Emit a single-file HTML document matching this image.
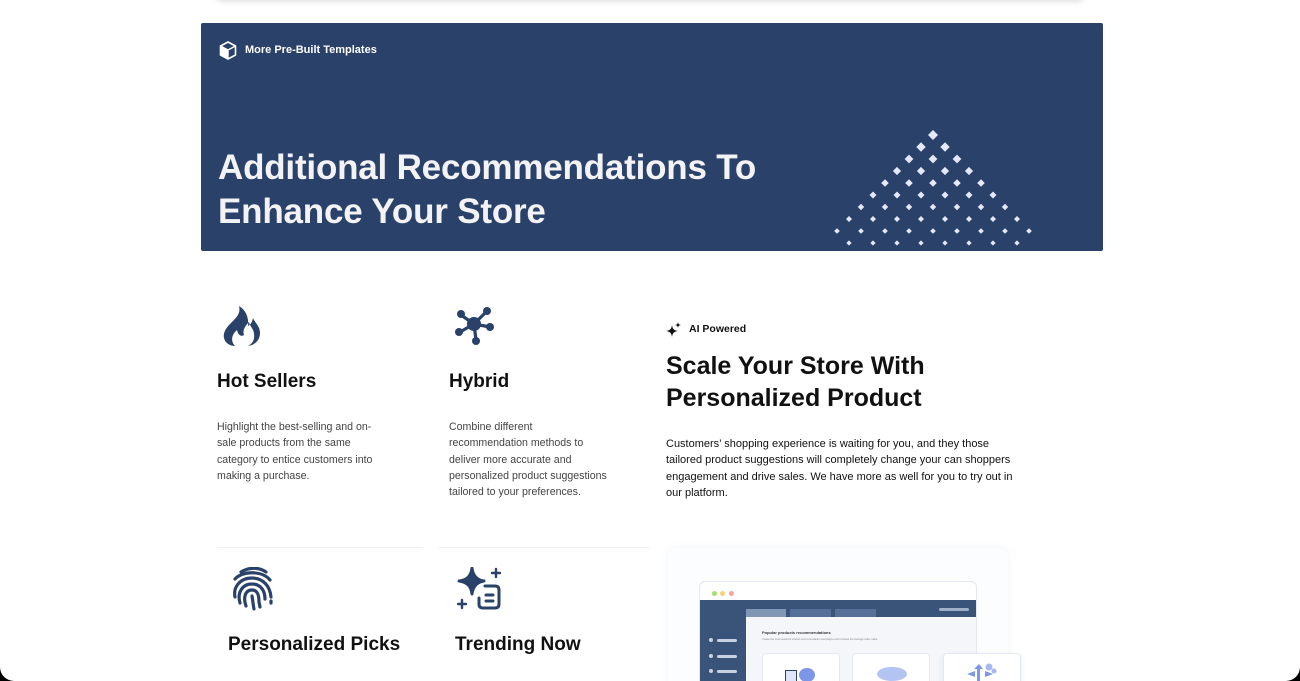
<!DOCTYPE html>
<html><head><meta charset="utf-8"><style>
*{margin:0;padding:0;box-sizing:border-box}
html,body{width:1300px;height:681px;overflow:hidden;background:#000}
.page{position:absolute;left:0;top:0;width:1300px;height:681px;background:#fff;border-radius:0 0 14px 14px;overflow:hidden;font-family:"Liberation Sans",sans-serif}
.abs{position:absolute}
.topcard{left:215px;top:-40px;width:870px;height:40px;background:#fff;box-shadow:0 2px 6px rgba(0,0,0,.12);border-radius:0 0 8px 8px}
.banner{left:201px;top:23px;width:902px;height:228px;background:#2a416a;border-radius:2px}
.tag{left:245px;top:44px;color:#fff;font-size:11px;font-weight:bold}
.h1{left:218px;top:146px;color:#f3f3f5;font-size:35px;font-weight:bold;line-height:44px;letter-spacing:-0.2px}
.ft{font-size:19px;font-weight:bold;color:#111}
.fd{font-size:10.6px;line-height:16.3px;color:#444;white-space:nowrap}
.line{height:1px;background:#efefef}
.rh{left:666px;top:350px;font-size:25px;font-weight:bold;line-height:32px;color:#111}
.rp{left:666px;top:436px;font-size:11px;line-height:16.3px;color:#111;white-space:nowrap}
</style></head><body><div class="page">
<div class="abs topcard"></div>
<div class="abs banner"></div>
<svg class="abs" style="left:219px;top:41px" width="18" height="19" viewBox="0 0 18 19"><path d="M9 1 L16.5 5 L16.5 14 L9 18 L1.5 14 L1.5 5 Z" fill="none" stroke="#fff" stroke-width="1.6" stroke-linejoin="round"/><path d="M1.5 5 L9 9 L16.5 5 M9 9 L9 18" fill="none" stroke="#fff" stroke-width="1.4"/><path d="M1.5 5 L9 9 L9 18 L1.5 14Z" fill="#fff"/></svg>
<div class="abs tag">More Pre-Built Templates</div>
<div class="abs h1">Additional Recommendations To<br>Enhance Your Store</div>
<svg class="abs" style="left:820px;top:120px" width="230" height="130" fill="#e4e8fb">
<path d="M113 10l5 5-5 5-5-5z"/>
<path d="M101 22.3l4.7 4.7-4.7 4.7-4.7-4.7zM125 22.3l4.7 4.7-4.7 4.7-4.7-4.7z"/>
<path d="M89 34.6l4.4 4.4-4.4 4.4-4.4-4.4zM113 34.6l4.4 4.4-4.4 4.4-4.4-4.4zM137 34.6l4.4 4.4-4.4 4.4-4.4-4.4z"/>
<path d="M77 46.9l4.1 4.1-4.1 4.1-4.1-4.1zM101 46.9l4.1 4.1-4.1 4.1-4.1-4.1zM125 46.9l4.1 4.1-4.1 4.1-4.1-4.1zM149 46.9l4.1 4.1-4.1 4.1-4.1-4.1z"/>
<path d="M65 59.2l3.8 3.8-3.8 3.8-3.8-3.8zM89 59.2l3.8 3.8-3.8 3.8-3.8-3.8zM113 59.2l3.8 3.8-3.8 3.8-3.8-3.8zM137 59.2l3.8 3.8-3.8 3.8-3.8-3.8zM161 59.2l3.8 3.8-3.8 3.8-3.8-3.8z"/>
<path d="M53 71.5l3.5 3.5-3.5 3.5-3.5-3.5zM77 71.5l3.5 3.5-3.5 3.5-3.5-3.5zM101 71.5l3.5 3.5-3.5 3.5-3.5-3.5zM125 71.5l3.5 3.5-3.5 3.5-3.5-3.5zM149 71.5l3.5 3.5-3.5 3.5-3.5-3.5zM173 71.5l3.5 3.5-3.5 3.5-3.5-3.5z"/>
<path d="M41 83.8l3.2 3.2-3.2 3.2-3.2-3.2zM65 83.8l3.2 3.2-3.2 3.2-3.2-3.2zM89 83.8l3.2 3.2-3.2 3.2-3.2-3.2zM113 83.8l3.2 3.2-3.2 3.2-3.2-3.2zM137 83.8l3.2 3.2-3.2 3.2-3.2-3.2zM161 83.8l3.2 3.2-3.2 3.2-3.2-3.2zM185 83.8l3.2 3.2-3.2 3.2-3.2-3.2z"/>
<path d="M29 96l3 3-3 3-3-3zM53 96l3 3-3 3-3-3zM77 96l3 3-3 3-3-3zM101 96l3 3-3 3-3-3zM125 96l3 3-3 3-3-3zM149 96l3 3-3 3-3-3zM173 96l3 3-3 3-3-3zM197 96l3 3-3 3-3-3z"/>
<path d="M17 108.2l2.8 2.8-2.8 2.8-2.8-2.8zM41 108.2l2.8 2.8-2.8 2.8-2.8-2.8zM65 108.2l2.8 2.8-2.8 2.8-2.8-2.8zM89 108.2l2.8 2.8-2.8 2.8-2.8-2.8zM113 108.2l2.8 2.8-2.8 2.8-2.8-2.8zM137 108.2l2.8 2.8-2.8 2.8-2.8-2.8zM161 108.2l2.8 2.8-2.8 2.8-2.8-2.8zM185 108.2l2.8 2.8-2.8 2.8-2.8-2.8zM209 108.2l2.8 2.8-2.8 2.8-2.8-2.8z"/>
<path d="M29 120.4l2.6 2.6-2.6 2.6-2.6-2.6zM53 120.4l2.6 2.6-2.6 2.6-2.6-2.6zM77 120.4l2.6 2.6-2.6 2.6-2.6-2.6zM101 120.4l2.6 2.6-2.6 2.6-2.6-2.6zM125 120.4l2.6 2.6-2.6 2.6-2.6-2.6zM149 120.4l2.6 2.6-2.6 2.6-2.6-2.6zM173 120.4l2.6 2.6-2.6 2.6-2.6-2.6zM197 120.4l2.6 2.6-2.6 2.6-2.6-2.6z"/>
</svg>

<svg class="abs" style="left:222px;top:305px" width="40" height="42" viewBox="0 0 40 42"><path d="M17 1C19 9 14 13 8 19C3 24 1 29 2 33C3 38 8 41 13 41C8 36 10 29 15 25C16 30 19 32 22 30C20 25 24 20 27 17C28 22 32 24 32 29C33 35 30 39 26 41C33 40 38 35 38 28C38 21 33 18 31 13C30 18 28 20 26 21C27 13 24 5 17 1Z" fill="#2a416a"/></svg>
<div class="abs ft" style="left:217px;top:371px">Hot Sellers</div>
<div class="abs fd" style="left:217px;top:419px">Highlight the best-selling and on-<br>sale products from the same<br>category to entice customers into<br>making a purchase.</div>
<svg class="abs" style="left:454px;top:306px" width="40" height="40" viewBox="0 0 40 40" fill="#2a416a" stroke="#2a416a" stroke-width="3.2"><line x1="20" y1="18" x2="7" y2="9"/><line x1="20" y1="18" x2="33" y2="5"/><line x1="20" y1="18" x2="36" y2="21"/><line x1="20" y1="18" x2="6" y2="26"/><line x1="20" y1="18" x2="22" y2="34"/><circle cx="20" cy="18" r="7" stroke="none"/><circle cx="7" cy="8" r="4" stroke="none"/><circle cx="33" cy="5" r="4" stroke="none"/><circle cx="36" cy="21" r="4" stroke="none"/><circle cx="5" cy="26" r="4" stroke="none"/><circle cx="22" cy="35" r="4" stroke="none"/></svg>
<div class="abs ft" style="left:449px;top:371px">Hybrid</div>
<div class="abs fd" style="left:449px;top:419px">Combine different<br>recommendation methods to<br>deliver more accurate and<br>personalized product suggestions<br>tailored to your preferences.</div>

<div class="abs line" style="left:217px;top:547px;width:205px"></div>
<div class="abs line" style="left:439px;top:547px;width:210px"></div>

<svg class="abs" style="left:232px;top:567px" width="43" height="44" viewBox="0 0 43 44" fill="none" stroke="#2a416a" stroke-width="3.2" stroke-linecap="round"><path d="M9 5C17 0 27 0 34 5"/><path d="M3 12C10 4 30 3 38 13"/><path d="M3 30C1 20 8 11 20 11C31 11 38 19 39 30"/><path d="M8 36C5 26 10 17 20 17C29 17 33 24 33 32"/><path d="M14 39C11 31 13 23 20 23C26 23 27 29 27 35L28 40"/><path d="M20 29C21 34 21 38 22 42"/><path d="M39 36L39 34"/></svg>
<div class="abs ft" style="left:228px;top:634px">Personalized Picks</div>
<svg class="abs" style="left:457px;top:567px" width="46" height="44" viewBox="0 0 46 44"><path d="M15 1C16 9 20 13 27 14C20 15 16 19 15 27C14 19 10 15 2 14C10 13 14 9 15 1Z" fill="#2a416a" stroke="#2a416a" stroke-width="3" stroke-linejoin="round"/><path d="M28 19H38Q42 19 42 23V37Q42 41 38 41H26Q22 41 22 37V31" fill="none" stroke="#2a416a" stroke-width="3" stroke-linecap="round"/><path d="M29 28H36M29 34H36" stroke="#2a416a" stroke-width="3" stroke-linecap="round"/><path d="M39 2V10M35 6H43M5 33V41M1 37H9" stroke="#2a416a" stroke-width="2.4" stroke-linecap="round"/></svg>
<div class="abs ft" style="left:455px;top:634px">Trending Now</div>

<svg class="abs" style="left:666px;top:322px" width="16" height="16" viewBox="0 0 16 16" fill="#111"><path d="M6 3C6.5 7 8 8.5 12 9C8 9.5 6.5 11 6 15C5.5 11 4 9.5 0 9C4 8.5 5.5 7 6 3Z"/><path d="M12 0C12.3 2 13 2.7 15 3C13 3.3 12.3 4 12 6C11.7 4 11 3.3 9 3C11 2.7 11.7 2 12 0Z"/></svg>
<div class="abs" style="left:689px;top:323px;font-size:10.5px;font-weight:bold;color:#111">AI Powered</div>
<div class="abs rh">Scale Your Store With<br>Personalized Product</div>
<div class="abs rp">Customers’ shopping experience is waiting for you, and they those<br>tailored product suggestions will completely change your can shoppers<br>engagement and drive sales. We have more as well for you to try out in<br>our platform.</div>

<div class="abs" style="left:668px;top:548px;width:340px;height:140px;background:#fcfdff;border-radius:10px;box-shadow:0 0 8px rgba(200,210,230,.25)"></div>
<div class="abs" style="left:699px;top:581px;width:278px;height:110px;background:#fff;border:1px solid #e3e8f4;border-radius:6px;overflow:hidden">
 <div class="abs" style="left:12px;top:9px;width:5px;height:5px;border-radius:50%;background:#a8e06c"></div>
 <div class="abs" style="left:20px;top:9px;width:5px;height:5px;border-radius:50%;background:#f5d27a"></div>
 <div class="abs" style="left:29px;top:9px;width:5px;height:5px;border-radius:50%;background:#f4a59a"></div>
 <div class="abs" style="left:0;top:18px;width:278px;height:100px;background:#3a5479"></div>
 <div class="abs" style="left:46px;top:27px;width:40px;height:9px;background:#8297b5"></div>
 <div class="abs" style="left:90px;top:27px;width:41px;height:9px;background:#56709a"></div>
 <div class="abs" style="left:135px;top:27px;width:41px;height:9px;background:#56709a"></div>
 <div class="abs" style="left:239px;top:26px;width:30px;height:3px;border-radius:2px;background:#9fb0c9"></div>
 <div class="abs" style="left:46px;top:35px;width:232px;height:80px;background:#f4f6fa"></div>
 <div class="abs" style="left:62px;top:48px;font-size:4px;font-weight:bold;color:#333">Popular products recommendations</div>
 <div class="abs" style="left:62px;top:56px;font-size:2.6px;color:#888">Create the most powerful product recommendation campaigns and increase the average order value.</div>
 <div class="abs" style="left:9px;top:56px;width:4px;height:4px;border-radius:50%;background:#c8d2e2"></div><div class="abs" style="left:17px;top:57px;width:20px;height:3px;border-radius:2px;background:#c8d2e2"></div>
 <div class="abs" style="left:9px;top:72px;width:4px;height:4px;border-radius:50%;background:#c8d2e2"></div><div class="abs" style="left:17px;top:73px;width:20px;height:3px;border-radius:2px;background:#c8d2e2"></div>
 <div class="abs" style="left:9px;top:87px;width:4px;height:4px;border-radius:50%;background:#c8d2e2"></div><div class="abs" style="left:17px;top:88px;width:20px;height:3px;border-radius:2px;background:#c8d2e2"></div>
 <div class="abs" style="left:62px;top:71px;width:78px;height:40px;background:#fff;border:1px solid #e3e8f4;border-radius:4px"></div>
 <div class="abs" style="left:152px;top:71px;width:78px;height:40px;background:#fff;border:1px solid #e3e8f4;border-radius:4px"></div>
 <div class="abs" style="left:85px;top:88px;width:12px;height:14px;border:1.5px solid #2a416a;background:#dfe6fb"></div><div class="abs" style="left:99px;top:86px;width:16px;height:14px;border-radius:50%;background:#7e96e8"></div>
 <div class="abs" style="left:177px;top:85px;width:30px;height:14px;border-radius:50%;background:#b4c4f2"></div>
</div>
<div class="abs" style="left:943px;top:653px;width:78px;height:40px;background:#fff;border:1px solid #e3e8f4;border-radius:4px;box-shadow:0 2px 6px rgba(150,170,210,.2)"></div>
<svg class="abs" style="left:965px;top:662px" width="34" height="20" fill="#7e96e8"><path d="M14 2l4 5h-3v13h-3V7h-3z"/><path d="M2 12l8-3v6zM28 12l-8-3v6z"/><circle cx="24" cy="5" r="3.5" fill="#a8b8ee"/><circle cx="29" cy="9" r="2.5" fill="#a8b8ee"/></svg>
</div></body></html>
